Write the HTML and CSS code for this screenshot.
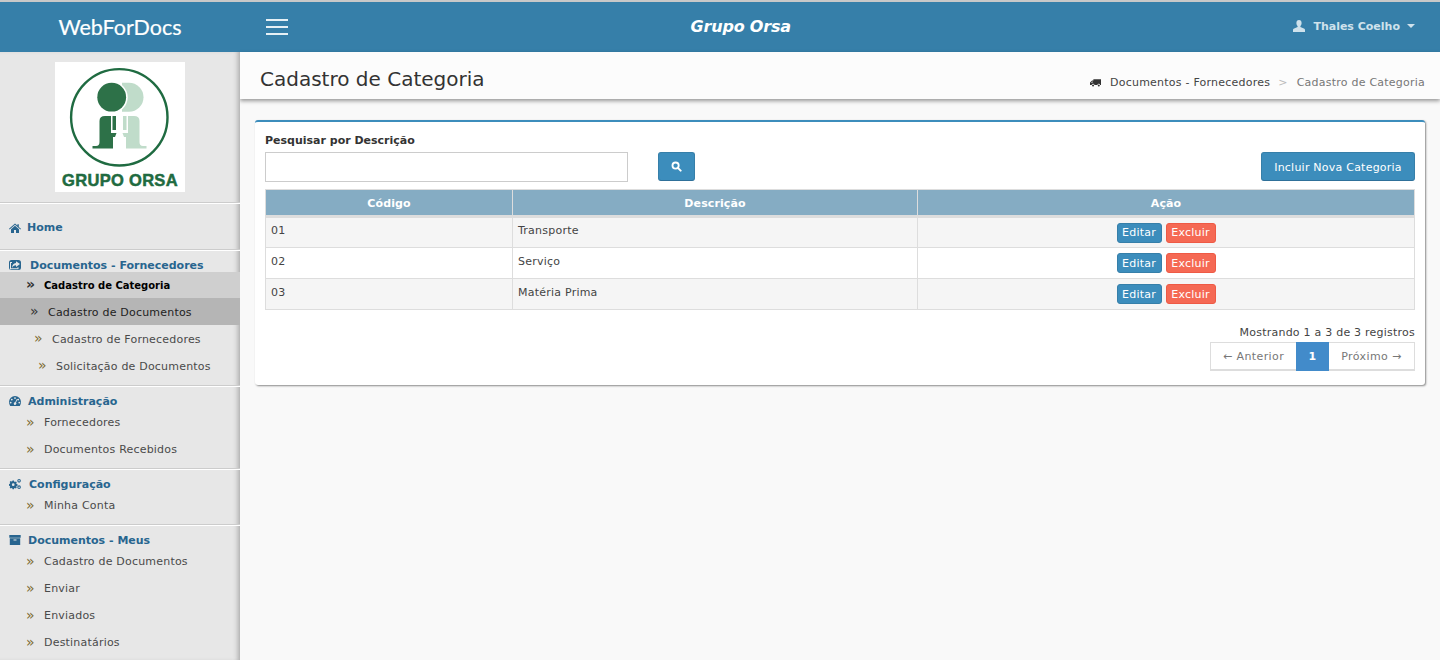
FILE: index.html
```html
<!DOCTYPE html>
<html lang="pt">
<head>
<meta charset="utf-8">
<title>WebForDocs</title>
<link rel="stylesheet" href="styles.css">
</head>
<body>
<header class="topbar">
  <div class="brand">WebForDocs</div>
  <div class="topbar-main">
    <div class="burger"><span></span><span></span><span></span></div>
    <div class="company">Grupo Orsa</div>
    <div class="user">
      <svg class="user-icon" viewBox="0 0 12 12"><path d="M6 0C4.300 0 3.400 1.300 3.400 3c0 1.300.5 2.400 1.200 3v1L.6 8.800C.2 9 0 9.400 0 10v2h12v-2c0-.6-.2-1-.6-1.200L7.400 7V6c.7-.6 1.200-1.700 1.200-3C8.600 1.300 7.700 0 6 0z"/></svg>
      <span>Thales Coelho</span>
      <i class="caret"></i>
    </div>
  </div>
</header>
<div class="layout">
  <aside class="sidebar">
    <div class="logo-wrap">
      <svg class="logo" viewBox="0 0 130 130">
        <rect width="130" height="130" fill="#fff"/>
        <circle cx="64.300" cy="55.300" r="48.200" fill="none" stroke="#1f6b41" stroke-width="2.400"/>
        <path d="M67 20.700h7a14.500 14.500 0 0 1 0 29h-7z" fill="#c0dcca"/>
        <circle cx="56.700" cy="35.200" r="16" fill="#fff"/>
        <circle cx="56.700" cy="35.200" r="14.400" fill="#2d7148"/>
        <path d="M44.500 59Q44.500 54 50 54H56V71H61.500L60 75H58V86.500H37.500V84H41Q44.500 84 44.500 80zM57.500 54H61V68H57.500z" fill="#2d7148"/>
        <path transform="matrix(-1 0 0 1 129 0)" d="M44.500 59Q44.500 54 50 54H56V71H61.500L60 75H58V86.500H37.500V84H41Q44.500 84 44.500 80zM57.500 54H61V68H57.500z" fill="#c0dcca"/>
        <text x="65" y="124" class="logo-text" text-anchor="middle">GRUPO ORSA</text>
      </svg>
    </div>
    <nav class="menu">
      <section class="menu-group group-home">
        <h3 class="menu-title"><svg class="ico" viewBox="0 0 12 12"><path d="M6 1.500L0 6.800l.6.700L6 2.800l5.400 4.700.6-.7-2.200-1.900V2.200H8.400v1.200zM2 7.300V11h3V8h2v3h3V7.300L6 3.800z"/></svg><span class="gap-home">Home</span></h3>
      </section>
      <section class="menu-group group-docs">
        <h3 class="menu-title"><svg class="ico" viewBox="0 0 12 12"><path fill-rule="evenodd" d="M2.500 1h7A2.500 2.500 0 0 1 12 3.500v5A2.500 2.500 0 0 1 9.500 11h-7A2.500 2.500 0 0 1 0 8.500v-5A2.500 2.500 0 0 1 2.500 1zM7 2.300v1.600C4.500 4.100 3 6 3 9c.8-2 2-2.800 4-2.800v1.700L11 5zM2 4v5.200h6.500V8.200h1v2H1V3h2v1z"/></svg><span class="gap-docs">Documentos - Fornecedores</span></h3>
        <ul class="sub">
          <li class="item current indent-0"><span class="chev">»</span><span class="lbl">Cadastro de Categoria</span></li>
          <li class="item hover indent-1 nudge"><span class="chev">»</span><span class="lbl">Cadastro de Documentos</span></li>
          <li class="item indent-2 nudge"><span class="chev">»</span><span class="lbl">Cadastro de Fornecedores</span></li>
          <li class="item indent-3 nudge"><span class="chev">»</span><span class="lbl">Solicitação de Documentos</span></li>
        </ul>
      </section>
      <section class="menu-group group-admin">
        <h3 class="menu-title"><svg class="ico" viewBox="0 0 12 12"><path fill-rule="evenodd" d="M6 1a6 6 0 0 0-6 6c0 1.500.4 2.700 1.200 4h9.600c.8-1.300 1.200-2.500 1.200-4a6 6 0 0 0-6-6zM6 2.200a.9.9 0 1 1 0 1.800.9.900 0 0 1 0-1.800zM2.800 3.700a.9.900 0 1 1 0 1.800.9.900 0 0 1 0-1.800zm6.400 0a.9.900 0 1 1 0 1.800.9.900 0 0 1 0-1.800zM1.700 6.700a.9.900 0 1 1 0 1.800.9.900 0 0 1 0-1.800zm8.600 0a.9.900 0 1 1 0 1.800.9.900 0 0 1 0-1.800zM7.800 4.100l.7.300-1.500 3.200a1.300 1.300 0 1 1-.8-.4z"/></svg><span class="gap-admin">Administração</span></h3>
        <ul class="sub">
          <li class="item indent-0"><span class="chev">»</span><span class="lbl">Fornecedores</span></li>
          <li class="item indent-0"><span class="chev">»</span><span class="lbl">Documentos Recebidos</span></li>
        </ul>
      </section>
      <section class="menu-group group-config">
        <h3 class="menu-title"><svg class="ico" viewBox="0 0 12.500 12"><path fill-rule="evenodd" d="M3.700 2.400h1.400l.3 1 .8.400.9-.5 1 1-.5.900.3.800 1 .3v1.400l-1 .3-.3.800.5.900-1 1-.9-.5-.8.300-.3 1H3.700l-.3-1-.8-.3-.9.500-1-1 .5-.9-.3-.8-1-.3V6l1-.3.300-.8-.5-.9 1-1 .9.500.8-.4zM4.400 5.300a1.400 1.400 0 1 0 0 2.800 1.400 1.400 0 0 0 0-2.800zM10.500 .8a1.900 1.900 0 1 1 0 3.800 1.900 1.900 0 0 1 0-3.800zm0 1.100a.8.800 0 1 0 0 1.600.8.800 0 0 0 0-1.600zM10.500 7.400a1.900 1.900 0 1 1 0 3.800 1.900 1.900 0 0 1 0-3.800zm0 1.100a.8.800 0 1 0 0 1.600.8.800 0 0 0 0-1.600z"/></svg><span class="gap-config">Configuração</span></h3>
        <ul class="sub">
          <li class="item indent-0"><span class="chev">»</span><span class="lbl">Minha Conta</span></li>
        </ul>
      </section>
      <section class="menu-group group-mine">
        <h3 class="menu-title"><svg class="ico" viewBox="0 0 12 12"><path fill-rule="evenodd" d="M.3 1h11.400v2.800H.3zM.8 4.300h10.400V11H.8zm3.700 1.200v1h3v-1z"/></svg><span class="gap-mine">Documentos - Meus</span></h3>
        <ul class="sub">
          <li class="item indent-0"><span class="chev">»</span><span class="lbl">Cadastro de Documentos</span></li>
          <li class="item indent-0"><span class="chev">»</span><span class="lbl">Enviar</span></li>
          <li class="item indent-0"><span class="chev">»</span><span class="lbl">Enviados</span></li>
          <li class="item indent-0"><span class="chev">»</span><span class="lbl">Destinatários</span></li>
        </ul>
      </section>
    </nav>
  </aside>
  <main class="content">
    <div class="page-head">
      <h1 class="page-title">Cadastro de Categoria</h1>
      <div class="crumbs">
        <svg class="truck" viewBox="0 0 13 11"><path fill-rule="evenodd" d="M4 1h9v7h-1a1.600 1.600 0 0 0-3.200 0H5.200A1.600 1.600 0 0 0 2 8H0V5l2.500-2.500H4zM3 3.500L1.200 5.200H3z"/><circle cx="3.600" cy="8.500" r="1.200"/><circle cx="10.400" cy="8.500" r="1.200"/></svg>
        <span class="crumb-link">Documentos - Fornecedores</span>
        <span class="crumb-sep">&gt;</span>
        <span class="crumb-now">Cadastro de Categoria</span>
      </div>
    </div>
    <div class="box">
      <label class="search-label">Pesquisar por Descrição</label>
      <div class="toolbar">
        <input class="search-input" type="text">
        <button class="btn btn-search"><svg class="search-ico" viewBox="0 0 12 12"><circle cx="5" cy="5" r="3.400" fill="none" stroke="#fff" stroke-width="2"/><path d="M7.500 7.500l3 3" stroke="#fff" stroke-width="2.200" stroke-linecap="round"/></svg></button>
        <button class="btn btn-new">Incluir Nova Categoria</button>
      </div>
      <table class="grid">
        <thead><tr><th class="col-a">Código</th><th class="col-b">Descrição</th><th>Ação</th></tr></thead>
        <tbody>
          <tr class="odd"><td>01</td><td>Transporte</td><td class="actions"><button class="btn mini edit">Editar</button><button class="btn mini del">Excluir</button></td></tr>
          <tr><td>02</td><td>Serviço</td><td class="actions"><button class="btn mini edit">Editar</button><button class="btn mini del">Excluir</button></td></tr>
          <tr class="odd"><td>03</td><td>Matéria Prima</td><td class="actions"><button class="btn mini edit">Editar</button><button class="btn mini del">Excluir</button></td></tr>
        </tbody>
      </table>
      <div class="info">Mostrando 1 a 3 de 3 registros</div>
      <div class="pager-row">
        <ul class="pager">
          <li class="pg">← Anterior</li>
          <li class="pg on">1</li>
          <li class="pg">Próximo →</li>
        </ul>
      </div>
    </div>
  </main>
</div>
</body>
</html>
```

FILE: styles.css
```css
* { box-sizing: border-box; }
html, body { margin: 0; height: 660px; overflow: hidden; }
body { background: #f9f9f9; font-family: "DejaVu Sans", Verdana, sans-serif; font-size: 11px; color: #444; letter-spacing: .23px; }
ul { list-style: none; margin: 0; padding: 0; }
h1, h3 { margin: 0; }

.topbar { display: flex; height: 52px; background: #367fa9; border-top: 2px solid #c8c8c8; }
.brand { width: 240px; text-align: center; color: #fff; font-family: "Lato", sans-serif; font-size: 21.500px; line-height: 50px; letter-spacing: 0; -webkit-text-stroke: .2px #fff; }
.topbar-main { flex: 1; display: flex; align-items: center; padding: 0 25px 0 26px; position: relative; }
.burger { display: flex; flex-direction: column; gap: 5px; width: 22px; }
.burger span { height: 2px; background: #e6f0f5; }
.company { flex: 1; text-align: center; color: #fff; font-size: 16px; font-weight: bold; font-style: italic; letter-spacing: -.2px; padding-right: 100px; margin-top: -2px; }
.user { display: flex; align-items: center; color: #cfe2ec; font-weight: bold; font-size: 11px; letter-spacing: 0; margin-top: -2px; }
.user-icon { width: 12px; height: 12px; fill: #cfe2ec; margin-right: 8px; }
.caret { width: 0; height: 0; border: 4px solid transparent; border-top-color: #cfe2ec; border-bottom: 0; margin-left: 7px; }

.layout { display: flex; height: 608px; }
.sidebar { width: 240px; flex: none; background: #e7e7e7; box-shadow: inset -5px 0 5px -3px #aaa; overflow: hidden; position: relative; z-index: 2; }
.logo-wrap { height: 150px; padding: 10px 0 0 55px; }
.logo { width: 130px; height: 130px; display: block; }
.logo-text { font-family: "Liberation Sans", Arial, sans-serif; font-weight: bold; font-size: 16.500px; fill: #1f6b41; letter-spacing: .3px; stroke: #1f6b41; stroke-width: .5px; }

.menu-group { border-top: 1px solid #ccc; box-shadow: inset 0 1px 0 #fff; }
.menu-title { display: flex; align-items: center; color: #28658f; font-size: 11px; font-weight: bold; letter-spacing: 0; padding-left: 9px; height: 23px; padding-top: 7px; }
.ico { width: 12px; height: 12px; fill: #28658f; flex: none; }
.gap-home { margin-left: 6px; }
.gap-docs { margin-left: 9px; }
.gap-admin { margin-left: 7px; }
.gap-config { margin-left: 8px; }
.gap-mine { margin-left: 7px; }
.group-home { height: 47px; }
.group-home .menu-title { height: 46px; padding-top: 3px; }
.group-docs { height: 136px; }
.group-docs .menu-title { height: 22px; padding-top: 8px; }
.group-admin { height: 83px; }
.group-config { height: 56px; }

.item { display: flex; align-items: center; height: 27px; color: #4a4a4a; font-size: 11px; letter-spacing: .2px; }
.nudge { padding-top: 1px; }
.chev { color: #7d6a33; font-size: 14px; line-height: 14px; width: 18px; flex: none; letter-spacing: 0; margin-top: -2px; }
.indent-0 { padding-left: 26px; }
.indent-1 { padding-left: 30px; }
.indent-2 { padding-left: 34px; }
.indent-3 { padding-left: 38px; }
.current { background: #cfcfcf; color: #000; font-weight: bold; height: 26px; font-size: 10px; letter-spacing: 0; }
.current .chev { color: #333; }
.hover { background: #b5b5b5; color: #222; }
.hover .chev { color: #333; }

.content { flex: 1; min-width: 0; }
.page-head { height: 47px; background: #fcfcfc; box-shadow: 0 2px 4px rgba(0,0,0,.4); padding: 0 15px 0 20px; display: flex; justify-content: space-between; }
.page-title { font-size: 20px; font-weight: normal; color: #333; line-height: 54px; letter-spacing: 0; }
.crumbs { display: flex; align-items: center; padding-top: 14px; color: #444; font-size: 11px; }
.truck { width: 11px; height: 10px; fill: #333; margin-right: 9px; }
.crumb-sep { color: #bbb; margin: 0 9px 0 8px; }
.crumb-now { color: #777; }

.box { margin: 21px 15px 0; height: 265px; background: #fff; border-radius: 3px; border-top: 2px solid #3c8dbc; box-shadow: 1px 1px 2px rgba(0,0,0,.45); padding: 12px 10px 0; }
.search-label { display: block; font-weight: bold; color: #333; font-size: 11px; letter-spacing: 0; height: 18px; line-height: 14px; }
.toolbar { display: flex; align-items: flex-start; height: 37px; }
.search-input { width: 363px; height: 30px; border: 1px solid #ccc; background: #fff; margin: 0; padding: 0; }
.btn { font-family: inherit; letter-spacing: inherit; border: 1px solid #367fa9; border-radius: 3px; background: #3c8dbc; color: #fff; padding: 0; margin: 0; }
.btn-search { width: 37px; height: 29px; margin-left: 30px; border-bottom-color: #2f7099; display: flex; align-items: center; justify-content: center; }
.search-ico { width: 11px; height: 11px; }
.btn-new { margin-left: auto; width: 154px; height: 29px; font-size: 11px; padding-top: 2px; border-bottom-color: #2f7099; }

.grid { width: 100%; border-collapse: collapse; table-layout: fixed; font-size: 11px; }
.grid th { height: 27px; background: #85acc3; color: #fff; font-weight: bold; font-size: 11px; letter-spacing: .1px; border: 1px solid #ddd; border-bottom-width: 3px; padding: 2px 0 0; }
.grid td { height: 31px; border: 1px solid #ddd; padding: 0 5px 4px; color: #444; }
.col-a { width: 247px; }
.col-b { width: 405px; }
.odd td { background: #f5f5f5; }
.grid td.actions { text-align: center; padding: 0; }
.mini { font-size: 11px; height: 20px; vertical-align: middle; }
.edit { width: 45px; margin-right: 4px; }
.del { width: 50px; background: #f56954; border-color: #ee5a45; }

.info { text-align: right; color: #444; margin-top: 16px; line-height: 14px; }
.pager-row { display: flex; justify-content: flex-end; margin-top: 2px; }
.pager { display: flex; height: 29px; border: 1px solid #ddd; border-bottom-width: 2px; letter-spacing: .4px; }
.pg { width: 85px; text-align: center; line-height: 27px; color: #777; background: #fff; }
.pg.on { width: 33px; color: #fff; font-weight: bold; margin: -1px 0 -2px; line-height: 29px; background: #428bca; }
```
